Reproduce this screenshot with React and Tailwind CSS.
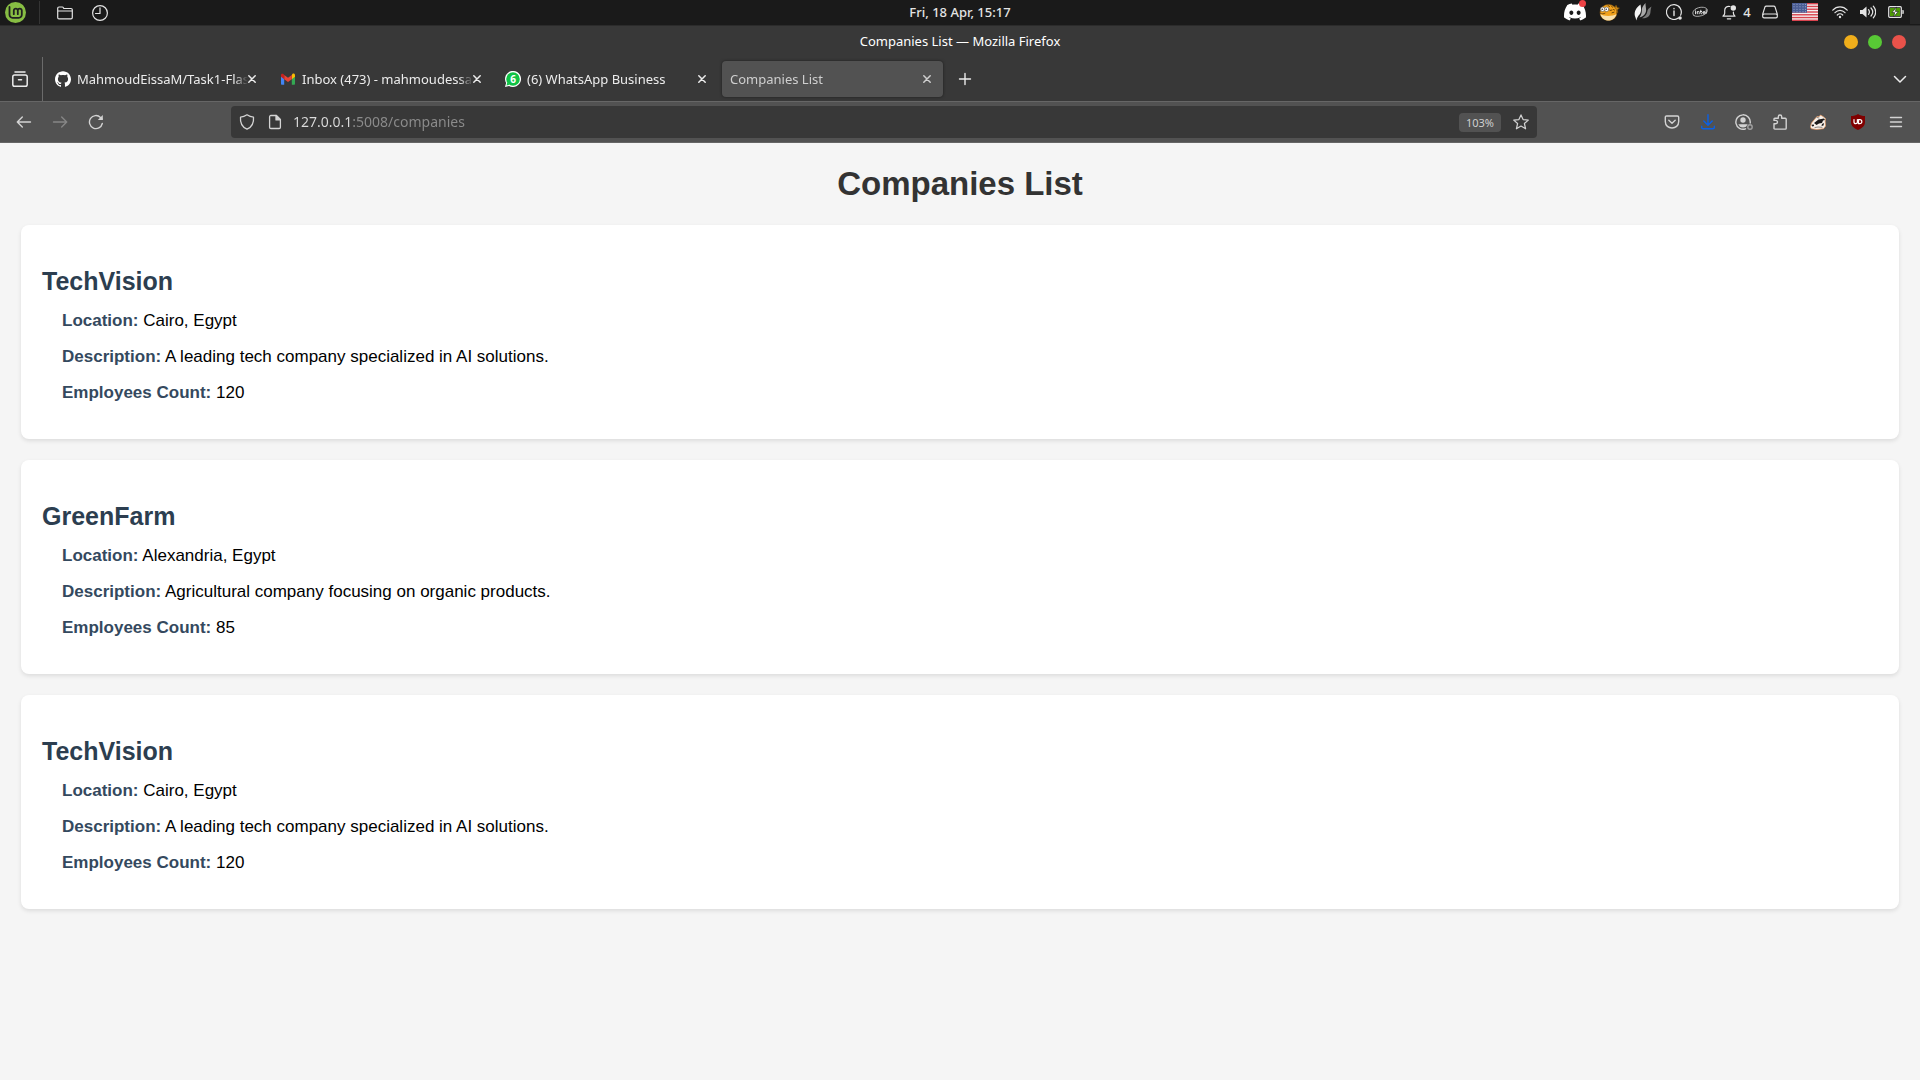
import React from "react";
import { SiLinuxmint, SiDiscord, SiGithub } from "react-icons/si";

const companies = [
  { id: 1, name: "TechVision", location: "Cairo, Egypt", description: "A leading tech company specialized in AI solutions.", employees: 120 },
  { id: 2, name: "GreenFarm", location: "Alexandria, Egypt", description: "Agricultural company focusing on organic products.", employees: 85 },
  { id: 3, name: "TechVision", location: "Cairo, Egypt", description: "A leading tech company specialized in AI solutions.", employees: 120 },
];

function Icon({ size = 16, w, h, sw = 1.3, box, className = "", children }) {
  return (
    <svg
      width={w || size}
      height={h || size}
      viewBox={box || "0 0 16 16"}
      fill="none"
      stroke="currentColor"
      strokeWidth={sw}
      strokeLinecap="round"
      strokeLinejoin="round"
      className={`shrink-0 ${className}`}
      aria-hidden="true"
    >
      {children}
    </svg>
  );
}

function Tray({ label, className, children }) {
  return (
    <button type="button" aria-label={label} className={`flex h-full shrink-0 items-center justify-center ${className}`}>
      {children}
    </button>
  );
}

function MintLogo() {
  return (
    <span className="flex size-[21px] items-center justify-center rounded-full bg-[#87bd43] text-[#202020]">
      <Icon size={21} box="0 0 21 21" sw={1.8}>
        <path d="M4.500 5v7.800a3 3 0 0 0 3 3h6.300a3 3 0 0 0 3-3V8.600a2 2 0 0 0-4 0v3.600M12.800 8.600a2 2 0 0 0-4 0v3.600" />
      </Icon>
    </span>
  );
}

function Puffer() {
  return (
    <Icon w={22} h={18} box="0 0 22 18" sw={0.6}>
      <path d="M16 6.500 18 2l1.300 2.500L21.500 5l-2 1.800.3 3L17 9z" fill="#c98a1a" stroke="#6b4508" />
      <ellipse cx="10.500" cy="9.500" rx="8.500" ry="8" fill="#f0a11c" stroke="#7a5010" />
      <path d="M2.300 11c3 2.500 12 2.800 16.200 0-.8 3.800-4 6.500-8 6.500s-7.400-2.700-8.200-6.500z" fill="#f7e0ad" stroke="none" />
      <path d="M10 2.500l1.500 1M13.500 3l1 1.300M12 7.500l2-.5M14 9.800l2-.6M15.500 6.500l1 .5" stroke="#6b4508" strokeWidth="1" />
      <circle cx="4.600" cy="6.300" r="2.200" fill="#fff" stroke="#555" />
      <circle cx="8.600" cy="6.300" r="2.300" fill="#fff" stroke="#555" />
      <circle cx="4.200" cy="6.300" r=".7" fill="#111" stroke="none" />
      <circle cx="8.200" cy="6.300" r=".7" fill="#111" stroke="none" />
      <path d="M2.500 10.200c1.500.8 3 .8 4.500 0" stroke="#7a5010" strokeWidth="1" />
    </Icon>
  );
}

function Flames() {
  return (
    <Icon w={18} h={18} box="0 0 18 18">
      <path d="M6.500 1.500C2 4.500.200 8.500.800 12.500l1.700 5c.300-3 1.700-4.300 3.200-6.200C7.800 8.500 7 4.500 6.500 1.500z" fill="#f4f4f4" stroke="none" />
      <path d="M11.500 0C8.500 3 7.500 5.500 7.800 8c.1 2-1 4.500-2.300 6.500 4-1 6.300-3.500 6.600-6.800.2-2.700-.8-5-.6-7.700z" fill="#a9a9a9" stroke="none" />
      <path d="M17.500 3.500c-2.500 1.500-4 3-4.200 5-.4 3-2.800 5.500-5.300 6.800 4.500.3 7.700-1.800 8.300-5 .4-2.300.2-4.500 1.200-6.800z" fill="#7b7b7b" stroke="none" />
    </Icon>
  );
}

function Flag() {
  return (
    <Icon w={26} h={18} box="0 0 26 18">
      <g stroke="none">
        <rect width="26" height="18" rx="1" fill="#f4f0f0" />
        {[0, 2, 4, 6, 8, 10, 12].map((i) => (
          <rect key={i} y={(i * 18) / 13} width="26" height="1.4" fill="#d8434e" />
        ))}
        <rect width="15" height="9.700" fill="#4a5d94" />
        {[1.5, 4, 6.5, 9].map((y) =>
          [2, 5, 8, 11, 13.500].map((x) => <circle key={`${x}-${y}`} cx={x} cy={y - 0.3} r=".5" fill="#b9c2dc" />)
        )}
      </g>
    </Icon>
  );
}

function SystemPanel() {
  return (
    <header className="grid h-[26px] grid-cols-[1fr_auto_1fr] items-center border-b border-[#2b2b2b] bg-[#1a1a1a] text-[#e4e4e4]">
      <div className="flex h-full items-center">
        <button type="button" aria-label="Menu" className="flex h-full w-[39px] items-center pl-[5px]">
          <MintLogo />
        </button>
        <span className="h-[23px] w-px bg-[#343434]" />
        <button type="button" aria-label="Files" className="flex h-full w-[50px] items-center justify-center">
          <Icon sw={1.2}>
            <path d="M.7 12.500V3.300c0-.8.500-1.300 1.300-1.300h3.300c.5 0 .8.200 1 .6l.5.900H14c.8 0 1.300.5 1.300 1.300v7.700c0 .8-.5 1.300-1.300 1.300H2c-.8 0-1.300-.5-1.300-1.300zM.7 6h14.600" />
          </Icon>
        </button>
        <button type="button" aria-label="Recent" className="flex h-full w-5 items-center justify-center">
          <Icon sw={1.200}>
            <circle cx="8" cy="8" r="7.400" />
            <path d="M8 2.800v5.700H3.500" />
          </Icon>
        </button>
      </div>
      <time className="pb-0.5 text-[13px] font-medium leading-5">Fri, 18 Apr, 15:17</time>
      <div className="flex h-full items-center justify-end pb-px">
        <Tray label="Discord" className="w-[34px]">
          <span className="relative">
            <SiDiscord size={22} color="#fff" />
            <span className="absolute -top-px right-0 size-[7px] rounded-full bg-[#ed4245]" />
          </span>
        </Tray>
        <Tray label="Puffer" className="w-[34px]"><Puffer /></Tray>
        <Tray label="Flames" className="w-[34px]"><Flames /></Tray>
        <Tray label="Updates" className="w-7">
          <Icon sw={1.200}>
            <path d="M12.300 14a7.400 7.400 0 1 1 2.300-2.800" />
            <path d="M8 7v4.500M8 4.500v.200" strokeWidth="1.400" />
            <circle cx="14" cy="14" r="1.800" fill="currentColor" stroke="none" />
          </Icon>
        </Tray>
        <Tray label="Graphics" className="w-6">
          <Icon w={16} h={12} box="0 0 16 12" sw={0.9}>
            <path d="M2 9.700C-.5 7.500 1 4 5 2.300c4-1.800 9.500-1.300 10.300 1.500.6 2.200-1.800 4.700-5.800 5.900-3 .9-6 .9-7.500 0" stroke="#bdbdbd" />
            <path d="M3.500 5.500v2.300M3.500 4v.1M5.300 7.800V5.500M5.300 6c.5-.8 1.900-.8 1.900.3v1.500M8.800 4.200v3c0 .5.300.6.800.6M8.200 5.500h1.500M11 6.700h2.300c0-1.700-2.400-1.700-2.400 0 0 1.300 1.400 1.400 2.200.8M14.200 3.800v3.600" stroke="#f0f0f0" />
          </Icon>
        </Tray>
        <Tray label="Notifications" className="w-11 gap-1.5 pl-1">
          <Icon sw={1.200}>
            <path d="M9 2.500C5.500 1.800 3.700 4 3.700 6.500v2.700c0 1.200-.8 2-1.700 3h12c-.8-1-1.600-1.800-1.600-3V8M6.300 14.800h3.400" />
            <circle cx="12.300" cy="4" r="2.700" fill="currentColor" stroke="none" />
          </Icon>
          <span className="text-[13px] font-medium leading-5">4</span>
        </Tray>
        <Tray label="Drives" className="w-7">
          <Icon sw={1.200}>
            <path d="M4.300 2.200h7.400c.7 0 1.100.3 1.400.9l2.200 7v2.400c0 .9-.5 1.400-1.400 1.400H2.100c-.9 0-1.400-.5-1.400-1.400v-2.400l2.200-7c.3-.6.700-.9 1.400-.9zM.9 10.800c.3-.6.700-.8 1.300-.8h11.600c.6 0 1 .2 1.300.8" />
          </Icon>
        </Tray>
        <Tray label="Keyboard layout" className="w-[42px]"><Flag /></Tray>
        <Tray label="Network" className="w-7">
          <Icon sw={1.200}>
            <path d="M.8 6.200c4-4.300 10.400-4.300 14.400 0M3 8.700c2.900-3.100 7.100-3.100 10 0M5.300 11c1.600-1.700 3.800-1.700 5.400 0" />
            <circle cx="8" cy="13" r="1.200" fill="currentColor" stroke="none" />
          </Icon>
        </Tray>
        <Tray label="Sound" className="w-7">
          <Icon sw={1.200}>
            <path d="M0 6h2.500L6.500 2.500v11L2.500 10H0z" fill="currentColor" stroke="none" />
            <path d="M8.500 5.700c1.100 1.400 1.100 3.200 0 4.600M11 4c2.200 2.500 2.200 5.500 0 8M13.300 2.200c3 3.600 3 8 0 11.600" />
          </Icon>
        </Tray>
        <Tray label="Power" className="w-7">
          <Icon sw={1.200}>
            <rect x=".7" y="2.700" width="12.600" height="10.600" rx="1" />
            <rect x="2" y="4" width="10" height="8" fill="#4e9a06" stroke="none" />
            <path d="M14.500 6.500h1v3h-1z" fill="currentColor" strokeWidth=".5" />
            <path d="M8.300 3.200 4 8.600h2.700L5.800 12.800 10.200 7.400H7.500z" fill="#fff" stroke="#1a1a1a" strokeWidth=".6" />
          </Icon>
        </Tray>
        <span className="h-full w-2.5 bg-[#272727]" />
      </div>
    </header>
  );
}

function TitleBar() {
  return (
    <div className="grid h-[31px] grid-cols-[1fr_auto_1fr] items-center bg-[#383838] text-white">
      <span />
      <p className="pb-0.5 text-[13px] leading-5">Companies List — Mozilla Firefox</p>
      <div className="flex justify-end gap-2.5 pr-3.5">
        <button type="button" aria-label="Minimize" className="size-3.5 rounded-full bg-[#f0ae1b]" />
        <button type="button" aria-label="Maximize" className="size-3.5 rounded-full bg-[#58c935]" />
        <button type="button" aria-label="Close window" className="size-3.5 rounded-full bg-[#e9524a]" />
      </div>
    </div>
  );
}

function GmailIcon() {
  return (
    <Icon size={16}>
      <g stroke="none">
        <path d="M1 4.500v8.300c0 .6.400 1 1 1h2.200V7.500z" fill="#4285f4" />
        <path d="M15 4.500v8.300c0 .6-.4 1-1 1h-2.200V7.500z" fill="#34a853" />
        <path d="M11.800 4v4.200L15 5.800V4.200c0-1.500-1.600-2-2.600-1.200z" fill="#fbbc04" />
        <path d="M4.200 8.200V3.900L8 6.800l3.800-2.900v4.300L8 11z" fill="#ea4335" />
        <path d="M1 4.200v1.600l3.200 2.400V4l-.6-.8C2.600 2.400 1 2.700 1 4.200z" fill="#c5221f" />
      </g>
    </Icon>
  );
}

function WhatsAppIcon() {
  return (
    <Icon size={16}>
      <path d="M0 16l1.100-4A8 8 0 1 1 4 14.900z" fill="#fff" stroke="none" />
      <circle cx="8" cy="8" r="6.800" fill="#0fc245" stroke="none" />
      <path d="M1.500 14.500l.8-3 2.200 2.200z" fill="#0fc245" stroke="none" />
      <text x="8" y="11.500" textAnchor="middle" fontSize="10" fontWeight="700" fontFamily="Noto Sans, sans-serif" fill="#fff" stroke="none">6</text>
    </Icon>
  );
}

const tabs = [
  { title: "MahmoudEissaM/Task1-Flas", icon: <SiGithub size={16} color="#fff" className="shrink-0" /> },
  { title: "Inbox (473) - mahmoudessa8", icon: <GmailIcon /> },
  { title: "(6) WhatsApp Business", icon: <WhatsAppIcon /> },
  { title: "Companies List", active: true },
];

function TabStrip() {
  return (
    <div className="flex h-11 items-center bg-[#383838] text-[#ececec]">
      <button type="button" aria-label="Recent browsing" className="flex h-full w-[43px] shrink-0 items-center border-r border-[#6b6b6b] pl-3">
        <Icon sw={1.500}>
          <path d="M3 1h10" />
          <rect x=".8" y="4" width="14.400" height="11.200" rx="1.800" />
          <path d="M6.500 8.800h3" />
        </Icon>
      </button>
      <div role="tablist" className="flex gap-1 px-1">
        {tabs.map((t) => (
          <div
            key={t.title}
            className={`flex h-9 w-[221px] items-center gap-1.5 rounded pl-2 pr-3 ${t.active ? "bg-[#525252] text-[#cfcfcf] shadow-[0_0_3px_rgba(0,0,0,0.5)]" : ""}`}
          >
            {t.icon}
            <button
              type="button"
              role="tab"
              aria-selected={!!t.active}
              className="-mr-1.5 min-w-0 flex-1 overflow-hidden whitespace-nowrap text-left text-[13px] leading-5 [mask-image:linear-gradient(to_right,black_92%,transparent)]"
            >
              {t.title}
            </button>
            <button type="button" aria-label={`Close ${t.title}`} className="shrink-0">
              <Icon size={8} box="4 4 8 8" sw={1.500}><path d="M4.800 4.800l6.400 6.400M11.200 4.800l-6.400 6.400" /></Icon>
            </button>
          </div>
        ))}
      </div>
      <button type="button" aria-label="New tab" className="flex size-9 items-center justify-center">
        <Icon sw={1.400}><path d="M8 2.500v11M2.500 8h11" /></Icon>
      </button>
      <button type="button" aria-label="List all tabs" className="ml-auto mr-3 flex h-9 items-center">
        <Icon sw={1.500}><path d="M2.500 5.500 8 11l5.500-5.500" /></Icon>
      </button>
    </div>
  );
}

function ToolButton({ label, className = "w-9", children }) {
  return (
    <button type="button" aria-label={label} className={`flex h-8 items-center justify-center ${className}`}>
      {children}
    </button>
  );
}

function NavBar() {
  return (
    <div className="flex h-[42px] items-center border-y border-[#666666] bg-[#525252] text-[#d3d3d3]">
      <div className="flex w-[231px] shrink-0 pl-1.5">
        <ToolButton label="Back"><Icon sw={1.400}><path d="M14.500 8h-13M6.300 3 1.300 8l5 5" /></Icon></ToolButton>
        <ToolButton label="Forward" className="w-9 text-[#868686]"><Icon sw={1.400}><path d="M1.500 8h13M9.700 3l5 5-5 5" /></Icon></ToolButton>
        <ToolButton label="Reload">
          <Icon sw={1.400}>
            <path d="M14.300 9.500A6.500 6.500 0 1 1 12.500 3.400L14 5" />
            <path d="M14.800 1v5H9.800z" fill="currentColor" stroke="none" />
          </Icon>
        </ToolButton>
      </div>
      <div className="flex h-8 min-w-0 flex-1 items-center rounded bg-[#383838] pl-2 pr-2">
        <Icon sw={1.300}><path d="M8 .8c2 1.400 4 2.200 6.500 2.400.5 5.500-1.600 9.800-6.500 12C3.100 13 1 8.700 1.500 3.200 4 3 6 2.200 8 .8z" /></Icon>
        <Icon sw={1.300} className="ml-3">
          <path d="M2.600 3v10.200c0 .8.500 1.300 1.300 1.300h8.200c.8 0 1.300-.5 1.300-1.300V5.500l-4-4H3.900c-.8 0-1.300.5-1.300 1.500z" />
          <path d="M9 1.500v4.400h4.400z" fill="currentColor" />
        </Icon>
        <input
          type="text"
          aria-label="Address"
          defaultValue="127.0.0.1:5008/companies"
          className="ml-2.5 min-w-0 flex-1 bg-[linear-gradient(to_right,#dcdcdc_57px,#8c8c8c_57px)] bg-clip-text text-[14px] leading-5 text-transparent outline-none"
        />
        <button type="button" className="mr-3 h-[19px] w-[42px] rounded bg-[#525252] text-center text-[11px] leading-[19px] text-[#cfcfcf]">103%</button>
        <button type="button" aria-label="Bookmark">
          <Icon sw={1.200}><path d="M8 .9l2.100 4.700 5.200.5-3.900 3.400 1.200 5.300L8 12.100l-4.600 2.700 1.200-5.300L.7 6.100l5.200-.5z" /></Icon>
        </button>
      </div>
      <div className="flex w-[383px] shrink-0 justify-end pr-1.5">
        <ToolButton label="Pocket">
          <Icon sw={1.400}><path d="M2.600 2h10.800c.8 0 1.300.5 1.300 1.300v4.200c0 8.700-13.400 8.700-13.400 0V3.300C1.300 2.500 1.800 2 2.600 2zM4.800 6.200 8 9.200l3.200-3" /></Icon>
        </ToolButton>
        <ToolButton label="Downloads" className="w-9 text-[#0a60e6]">
          <Icon sw={1.400}><path d="M8 .8v10M3.800 7 8 11.200 12.200 7M1.700 12.300v1.200c0 .9.500 1.300 1.300 1.300h10c.8 0 1.300-.4 1.300-1.300v-1.200" /></Icon>
        </ToolButton>
        <ToolButton label="Account">
          <Icon w={18} h={16} box="0 0 18 16" sw={1.400}>
            <path d="M10.500 14.800A7.200 7.200 0 1 1 15.200 9" />
            <circle cx="8" cy="6" r="2.700" fill="currentColor" stroke="none" />
            <path d="M3.300 10.300h9.400L11 12.800c-1.800 1-4.200 1-6 0z" fill="currentColor" stroke="none" />
            <circle cx="15" cy="13" r="2.200" stroke="#a0a0a0" />
          </Icon>
        </ToolButton>
        <ToolButton label="Extensions">
          <Icon sw={1.400}><path d="M2 9.800h1.800a1.700 1.700 0 0 0 0-3.400H2V5.200c0-.6.300-.9.900-.9h3.400V2.700a1.700 1.700 0 0 1 3.400 0v1.600h3.600c.6 0 .9.3.9.900v9c0 .6-.3.900-.9.900H2.900c-.6 0-.9-.3-.9-.9z" /></Icon>
        </ToolButton>
        <ToolButton label="Privacy Badger" className="w-10">
          <Icon sw={0.700}>
            <path d="M.4 12.500 1.500 9l3.300-4L7 2.500l2 .2L10.500 1l2.500 1.500 2.500 2-.3 3 .4 4.500-2.100 2.700-7 .8-5-.8z" fill="#f8f1ea" stroke="#e6965f" />
            <path d="M4 9 8.500 5.500l5.500-1 1 1.500-2 .5-1 2.500-3 .5-2.500 1.500zM1.500 10.800l2.300-.4.3 1.600-2 .5zM12 10l2-1-.5 2.500-2 .5z" fill="#1c1a1a" stroke="none" />
            <path d="M5 13.500l3-.5 4 .3M7 3.500l2 .5" stroke="#8a8480" strokeWidth="1" />
          </Icon>
        </ToolButton>
        <ToolButton label="uBlock Origin" className="w-10">
          <Icon>
            <path d="M8 0c2.200 1.500 4.300 2 7 2v6c0 3.800-2.600 6-7 8-4.400-2-7-4.200-7-8V2c2.700 0 4.800-.5 7-2z" fill="#800000" stroke="none" />
            <path d="M4 5.500v2.500a1.700 1.700 0 0 0 3.400 0V5.500M8.500 5.600h1.300a2 2 0 0 1 0 4.100H8.500z" stroke="#fff" strokeWidth="1.200" />
          </Icon>
        </ToolButton>
        <ToolButton label="Application menu"><Icon sw={1.400}><path d="M2.500 3.500h11M2.500 8h11M2.500 12.500h11" /></Icon></ToolButton>
      </div>
    </div>
  );
}

function Field({ label, value }) {
  return (
    <p>
      <strong className="font-bold text-[#34495e]">{label}:</strong> {value}
    </p>
  );
}

function CompanyCard({ company }) {
  return (
    <article className="rounded-lg bg-white px-[21px] pb-9 pt-[42px] shadow-[0_2px_4px_rgba(0,0,0,0.1)]">
      <h2 className="text-[25px] font-bold leading-7 text-[#2c3e50]">{company.name}</h2>
      <div className="mt-4 flex flex-col gap-4 pl-5 text-[17px] leading-5 text-black">
        <Field label="Location" value={company.location} />
        <Field label="Description" value={company.description} />
        <Field label="Employees Count" value={company.employees} />
      </div>
    </article>
  );
}

export default function App() {
  return (
    <div className="flex min-h-screen flex-col bg-[#f5f5f5] font-['Noto_Sans',sans-serif]">
      <SystemPanel />
      <TitleBar />
      <TabStrip />
      <NavBar />
      <main className="flex-1 px-[21px] py-[21px] font-['Liberation_Sans',Arial,sans-serif]">
        <h1 className="text-center text-[33px] font-bold leading-10 text-[#333333]">Companies List</h1>
        <div className="mt-[21px] flex flex-col gap-[21px]">
          {companies.map((c) => (
            <CompanyCard key={c.id} company={c} />
          ))}
        </div>
      </main>
    </div>
  );
}
